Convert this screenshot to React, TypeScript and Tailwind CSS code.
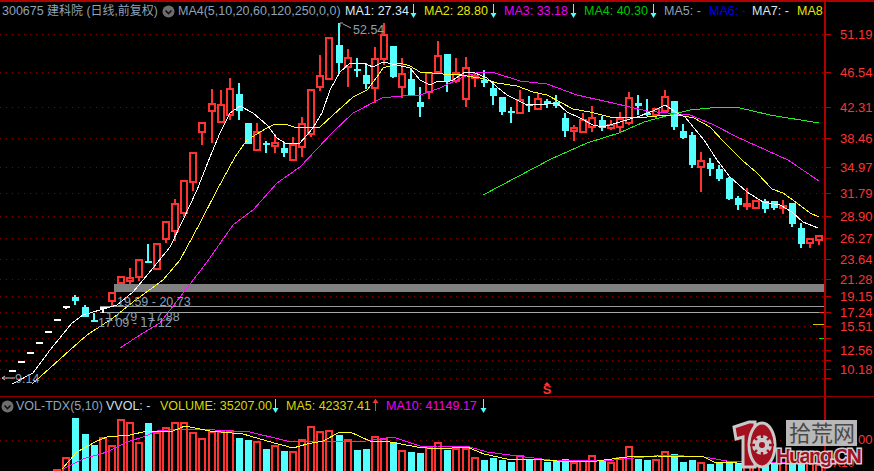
import React from 'react';

type Candle = [number, number, number, number, 'r' | 'c' | 'w'];

const RED = '#ff3232';
const CYAN = '#54ffff';
const GRID = '#8c0000';

const xOf = (n: number) => Math.round(12 + 9.07 * n);

// body top, body bottom, high, low, colour (page pixels)
const candles: Candle[] = [
  [370, 371, 370, 371, 'w'], [361, 362, 361, 362, 'w'], [352, 353, 352, 353, 'w'], [342, 343, 342, 343, 'w'],
  [331, 332, 331, 332, 'w'], [319, 320, 319, 320, 'w'], [306, 307, 306, 309, 'w'], [297, 301, 295, 305, 'c'],
  [307, 317, 305, 317, 'c'], [320, 321, 313, 322, 'c'], [307, 308, 307, 313, 'w'], [292, 301, 292, 306, 'r'],
  [276, 283, 276, 283, 'r'], [277, 281, 268, 284, 'r'], [259, 277, 259, 281, 'r'], [261, 263, 244, 263, 'c'],
  [243, 269, 243, 269, 'r'], [221, 239, 221, 243, 'r'], [203, 231, 199, 241, 'r'], [180, 213, 180, 217, 'r'],
  [152, 182, 152, 191, 'r'], [122, 132, 122, 145, 'r'], [103, 111, 89, 143, 'r'], [104, 122, 90, 122, 'r'],
  [88, 115, 78, 120, 'r'], [94, 111, 83, 120, 'c'], [123, 144, 123, 144, 'c'], [131, 150, 123, 151, 'r'],
  [143, 145, 141, 153, 'c'], [142, 146, 134, 153, 'r'], [148, 153, 143, 157, 'c'], [144, 160, 137, 160, 'r'],
  [123, 147, 117, 157, 'r'], [89, 134, 89, 137, 'r'], [75, 87, 55, 91, 'r'], [37, 79, 37, 79, 'r'],
  [45, 63, 23, 74, 'c'], [57, 67, 49, 87, 'r'], [69, 71, 58, 77, 'c'], [75, 84, 63, 89, 'c'],
  [58, 88, 47, 103, 'r'], [34, 59, 23, 65, 'r'], [46, 77, 46, 78, 'c'], [73, 87, 58, 98, 'r'],
  [79, 95, 68, 95, 'c'], [102, 107, 87, 117, 'c'], [72, 92, 72, 99, 'r'], [55, 72, 41, 73, 'r'],
  [54, 81, 54, 92, 'c'], [72, 81, 58, 83, 'r'], [67, 99, 57, 107, 'r'], [75, 78, 73, 87, 'r'],
  [80, 83, 70, 87, 'c'], [88, 96, 82, 105, 'c'], [97, 112, 97, 115, 'c'], [111, 113, 107, 123, 'c'],
  [99, 113, 90, 113, 'r'], [104, 105, 96, 112, 'c'], [98, 109, 93, 109, 'r'], [101, 104, 99, 108, 'c'],
  [102, 106, 95, 108, 'c'], [118, 131, 113, 137, 'c'], [127, 131, 125, 141, 'r'], [119, 132, 113, 132, 'r'],
  [117, 127, 106, 132, 'r'], [120, 128, 116, 131, 'c'], [124, 128, 120, 130, 'r'], [118, 127, 112, 133, 'r'],
  [97, 123, 92, 125, 'r'], [103, 106, 95, 115, 'c'], [113, 115, 99, 116, 'c'], [108, 115, 108, 119, 'r'],
  [96, 111, 90, 113, 'r'], [101, 127, 101, 130, 'c'], [131, 138, 124, 139, 'c'], [135, 165, 132, 168, 'c'],
  [160, 167, 152, 192, 'r'], [163, 169, 158, 176, 'c'], [169, 179, 165, 181, 'c'], [178, 199, 177, 200, 'c'],
  [198, 205, 196, 210, 'c'], [203, 206, 188, 210, 'r'], [200, 208, 200, 208, 'r'], [201, 209, 199, 213, 'c'],
  [201, 208, 201, 210, 'c'], [205, 208, 200, 214, 'r'], [203, 224, 203, 227, 'c'], [228, 244, 223, 248, 'c'],
  [238, 243, 238, 248, 'r'], [235, 240, 235, 245, 'r'],
];

const ma1 = '12,384 33,373 50,350 72,323 83,315 100,310 117,305 133,292 153,268 170,247 183,220 197,190 210,157 220,133 230,113 240,106 253,113 267,125 277,138 285,143 300,143 313,128 322,113 330,90 340,72 350,63 363,63 373,67 383,62 397,65 410,68 420,80 430,85 438,81 447,82 453,80 465,72 475,73 487,78 497,87 507,95 517,100 527,105 547,104 557,103 567,112 580,118 593,125 603,127 620,122 640,116 653,111 665,105 677,113 685,117 704,140 717,160 730,177 747,192 763,202 780,205 792,212 803,222 818,228';
const ma2 = '32,384 50,368 70,350 87,335 113,318 133,302 163,280 180,260 200,223 217,190 235,157 247,140 267,128 275,124 285,124 297,128 320,127 333,115 353,97 367,90 377,77 383,68 400,63 410,66 420,72 443,74 460,75 480,78 497,83 517,86 533,92 547,95 560,102 573,109 590,112 610,117 630,118 647,117 667,115 678,115 694,118 710,127 724,142 742,160 757,173 772,189 783,193 797,203 810,213 819,217';
const ma3 = '120,348 143,333 160,323 187,288 207,262 233,225 253,210 277,183 300,167 333,132 353,113 382,98 410,95 420,95 440,88 463,77 480,72 495,73 520,81 547,84 577,95 613,103 647,111 678,114 690,115 714,125 737,137 788,160 819,181';
const ma4 = '483,195 551,159 587,143 619,133 644,122 670,115 690,110 720,107 740,108 770,115 819,123';

const gridYs = [34, 72, 107, 138, 167, 193, 216, 238, 259, 279, 296, 312, 326, 338, 350, 360, 369, 378];
const axisLabels: [string, number][] = [
  ['51.19', 34], ['46.54', 72], ['42.31', 107], ['38.46', 138], ['34.97', 167], ['31.79', 193], ['28.90', 216],
  ['26.27', 238], ['23.64', 259], ['21.28', 279], ['19.15', 296], ['17.24', 312], ['15.51', 326], ['12.56', 350], ['10.18', 369],
];

// bar top for n = 5..89, c marks the falling days
const volumes: [number, 'r' | 'c'][] = [
  [470, 'r'], [458, 'r'], [419, 'c'], [435, 'c'], [446, 'c'], [438, 'r'], [446, 'r'], [420, 'r'], [423, 'r'], [443, 'r'],
  [424, 'c'], [433, 'r'], [428, 'r'], [423, 'r'], [423, 'r'], [433, 'r'], [439, 'r'], [432, 'r'], [432, 'r'], [431, 'r'],
  [439, 'c'], [441, 'c'], [442, 'r'], [450, 'c'], [446, 'r'], [452, 'c'], [452, 'r'], [440, 'r'], [427, 'r'], [432, 'r'],
  [431, 'r'], [436, 'c'], [440, 'r'], [451, 'c'], [450, 'c'], [437, 'r'], [439, 'r'], [443, 'c'], [451, 'r'], [453, 'c'],
  [454, 'c'], [447, 'r'], [443, 'r'], [451, 'c'], [449, 'r'], [449, 'r'], [458, 'r'], [461, 'c'], [459, 'c'], [461, 'c'],
  [463, 'c'], [456, 'r'], [461, 'c'], [459, 'r'], [463, 'c'], [462, 'c'], [460, 'c'], [463, 'r'], [461, 'r'], [456, 'r'],
  [462, 'c'], [463, 'r'], [458, 'r'], [447, 'r'], [460, 'c'], [461, 'c'], [460, 'r'], [452, 'r'], [455, 'c'], [463, 'c'],
  [461, 'c'], [463, 'r'], [465, 'c'], [463, 'c'], [462, 'c'], [464, 'c'], [462, 'r'], [464, 'r'], [465, 'c'], [465, 'c'],
  [463, 'r'], [463, 'c'], [461, 'c'], [463, 'r'], [465, 'r'],
];
const volMa5 = '62,470 77,453 97,442 107,438 130,436 147,432 173,432 185,427 210,432 243,435 267,442 293,449 307,445 323,442 340,433 350,433 370,442 390,443 417,448 437,450 467,448 484,455 507,460 544,461 570,463 597,462 627,458 657,457 704,458 714,463 737,464 770,465 822,464';
const volMa10 = '63,470 83,460 107,453 127,443 143,438 157,432 180,430 197,430 250,433 287,442 307,443 367,442 393,438 420,447 437,447 470,448 487,453 517,457 550,461 604,462 664,456 704,458 727,462 770,464 822,463';

const Arrow: React.FC<{ color: string; up?: boolean }> = ({ color, up }) => (
  <svg width="7" height="14" viewBox="0 0 7 14" className="shrink-0">
    <path d="M3.5 0V12" stroke={color} strokeWidth="1" fill="none" />
    {up ? <path d="M0.5 4L3.5 0L6.5 4Z" fill={color} /> : <path d="M0.5 9H6.5L3.5 14Z" fill={color} />}
  </svg>
);

const Chevron: React.FC = () => (
  <svg width="13" height="13" viewBox="0 0 13 13" className="shrink-0">
    <circle cx="6.5" cy="6.5" r="6" fill="#6e6e6e" />
    <path d="M3.5 5.5L6.5 8.5L9.5 5.5" stroke="#111" strokeWidth="1.6" fill="none" />
  </svg>
);

const CandleMark: React.FC<{ n: number; c: Candle }> = ({ n, c }) => {
  const x = xOf(n);
  const [top, bottom, high, low, kind] = c;
  if (kind === 'r') {
    return (
      <g>
        <rect x={x - 1} y={high} width={2} height={low - high} fill={RED} />
        {bottom - top <= 2 ? (
          <rect x={x - 4} y={top} width={8} height={3} fill={RED} />
        ) : (
          <rect x={x - 3} y={top + 1} width={6} height={bottom - top - 1} fill="#000" stroke={RED} strokeWidth={2} />
        )}
      </g>
    );
  }
  const color = kind === 'c' ? CYAN : '#ffffff';
  return (
    <g>
      <rect x={x - 1} y={high} width={2} height={low - high} fill={color} />
      <rect x={x - 3.5} y={top} width={7} height={Math.max(bottom - top, 2)} fill={color} />
    </g>
  );
};

const Watermark: React.FC = () => (
  <svg width="136" height="54" viewBox="0 0 136 54" className="absolute left-[730px] top-[416px] [font-family:'Liberation_Sans','Noto_Sans_CJK_SC',sans-serif]">
    <rect x="56" y="2" width="71" height="26" fill="#c8c8c8" fillOpacity="0.92" />
    <text x="59" y="23" fontSize="22" fill="#4a4a4a">拾荒网</text>
    <path d="M4 9L19 4H25V49H13V19L6 21Z" fill="#a3101f" stroke="#c9c9c9" strokeWidth="3" />
    <ellipse cx="32" cy="27" rx="13" ry="22" fill="#a3101f" stroke="#c9c9c9" strokeWidth="3" />
    <circle cx="32" cy="27" r="10" fill="#c9c9c9" />
    <circle cx="32" cy="27" r="3" fill="#a3101f" />
    <g stroke="#a3101f" strokeWidth="2.4">
      <path d="M32 15V20M32 34V39M20 27H25M39 27H44M23.5 18.5L27 22M37 32L40.5 35.5M40.5 18.5L37 22M27 32L23.5 35.5" />
    </g>
    <text x="46" y="45" fontSize="21" fontWeight="700" fill="#a3101f" stroke="#cfcfcf" strokeWidth="3" paintOrder="stroke" textLength="86">Huang.CN</text>
  </svg>
);

const App: React.FC = () => {
  return (
    <div className="relative w-[874px] h-[471px] bg-black overflow-hidden flex flex-col border-t-2 border-[#b00000] [font-family:'Liberation_Sans','Noto_Sans_CJK_SC',sans-serif]">
      <div className="flex h-[395px] border-b border-[#8c0000]">
        <div className="w-[824px] flex flex-col overflow-hidden">
          <div className="h-[18px] flex items-center pl-[2px] text-[12.5px] whitespace-nowrap shrink-0">
            <span className="text-[#8fa3b8] w-[160px] text-[12px]"><span className="text-[12.5px]">300675</span> 建科院 (日线,前复权)</span>
            <Chevron />
            <span className="text-[#8fa3b8] ml-[3px] w-[167px]">MA4(5,10,20,60,120,250,0,0)</span>
            <span className="text-[#dcebf5] w-[65px]">MA1: 27.34</span>
            <Arrow color={CYAN} />
            <span className="text-[#e6e600] ml-[7px] w-[66px]">MA2: 28.80</span>
            <Arrow color={CYAN} />
            <span className="text-[#f000f0] ml-[7px] w-[66px]">MA3: 33.18</span>
            <Arrow color={CYAN} />
            <span className="text-[#00c800] ml-[7px] w-[66px]">MA4: 40.30</span>
            <Arrow color={CYAN} />
            <span className="text-[#8fa3b8] ml-[7px] w-[45px]">MA5: -</span>
            <span className="text-[#0000f0] w-[43px]">MA6: -</span>
            <span className="text-[#d8e8f2] w-[45px]">MA7: -</span>
            <span className="text-[#e6e600]">MA8</span>
          </div>
          <svg width="824" height="377" viewBox="0 20 824 377" className="block shrink-0">
            <g shapeRendering="crispEdges">
              {gridYs.map(y => (
                <line key={y} x1="0" x2="824" y1={y + 0.5} y2={y + 0.5} stroke={GRID} strokeWidth="1" strokeDasharray="1 5" />
              ))}
              <rect x="114" y="284" width="710" height="8" fill="#808080" />
              <rect x="100" y="306" width="724" height="1" fill="#9a9a9a" />
              <rect x="100" y="312" width="724" height="1" fill="#a8a8a8" />
              <rect x="819" y="312" width="5" height="1" fill={RED} />
              <rect x="813" y="324" width="11" height="1" fill="#c8c800" />
              <rect x="819" y="338" width="5" height="1" fill="#00e000" />
              {candles.map((c, n) => (
                <CandleMark key={n} n={n} c={c} />
              ))}
            </g>
            <g shapeRendering="crispEdges" fill="none">
              <polyline points={ma3} stroke="#ff10ff" strokeWidth="1" />
              <polyline points={ma4} stroke="#20f020" strokeWidth="1" />
              <polyline points={ma2} stroke="#ffff20" strokeWidth="1" />
              <polyline points={ma1} stroke="#ffffff" strokeWidth="1" />
            </g>
            <g fontSize="12.5" fill="#8aa0b4">
              <text x="353" y="34">52.54</text>
              <text x="15" y="383">9.14</text>
              <text x="117" y="306">19.59 - 20.73</text>
              <text x="106" y="321">17.79 - 17.88</text>
              <text x="98" y="327">17.09 - 17.12</text>
            </g>
            <path d="M340 23H343M340 23V27M343 24L351 28" stroke="#a8a8a8" fill="none" />
            <path d="M2 378H15M2 378L5 376M2 378L5 380" stroke="#c8c8c8" fill="none" />
            <text x="547" y="394" fontSize="13" fontWeight="700" fill={RED} textAnchor="middle">S</text>
            <path d="M544 385H550L547 382Z" fill={RED} />
          </svg>
        </div>
        <div className="w-[50px] border-l-2 border-[#b00000]">
          <svg width="48" height="395" viewBox="826 2 48 395" className="block">
            <g shapeRendering="crispEdges">
              {gridYs.map(y => (
                <rect key={y} x="826" y={y} width="5" height="1" fill="#b00000" />
              ))}
            </g>
            {axisLabels.map(([t, y]) => (
              <text key={t} x="840" y={y + 5} fontSize="13" fill={RED}>{t}</text>
            ))}
          </svg>
        </div>
      </div>
      <div className="flex flex-1 min-h-0">
        <div className="w-[824px] flex flex-col overflow-hidden">
          <div className="h-[18px] flex items-center pl-[1px] text-[12.5px] whitespace-nowrap shrink-0">
            <Chevron />
            <span className="text-[#8fa3b8] ml-[2px] w-[90px]">VOL-TDX(5,10)</span>
            <span className="text-[#d0e0ea] w-[54px]">VVOL: -</span>
            <span className="text-[#d8d800] w-[112px]">VOLUME: 35207.00</span>
            <Arrow color={CYAN} />
            <span className="text-[#d8d800] ml-[7px] w-[86px]">MA5: 42337.41</span>
            <Arrow color={RED} up />
            <span className="text-[#f000f0] ml-[7px] w-[94px]">MA10: 41149.17</span>
            <Arrow color={CYAN} />
          </div>
          <svg width="824" height="56" viewBox="0 416 824 56" className="block">
            <line x1="0" x2="824" y1="441.5" y2="441.5" stroke={GRID} strokeWidth="1" strokeDasharray="1 5" shapeRendering="crispEdges" />
            <g shapeRendering="crispEdges">
              {volumes.map(([top, kind], i) => {
                const x = xOf(i + 5);
                return kind === 'c' ? (
                  <rect key={i} x={x - 3.5} y={top} width={7} height={480 - top} fill={CYAN} />
                ) : (
                  <rect key={i} x={x - 3} y={top + 1} width={6} height={480 - top} fill="#000" stroke={RED} strokeWidth={2} />
                );
              })}
            </g>
            <g shapeRendering="crispEdges" fill="none">
              <polyline points={volMa10} stroke="#ff10ff" strokeWidth="1" />
              <polyline points={volMa5} stroke="#ffff20" strokeWidth="1" />
            </g>
          </svg>
        </div>
        <div className="w-[50px] border-l-2 border-[#b00000]">
          <svg width="48" height="74" viewBox="826 398 48 74" className="block">
            <rect x="826" y="441" width="5" height="1" fill="#b00000" />
            <text x="840" y="445" fontSize="13" fill={RED}>13.00</text>
            <text x="833" y="468" fontSize="12" fill={RED}>X10</text>
          </svg>
        </div>
      </div>
      <Watermark />
    </div>
  );
};

export default App;
